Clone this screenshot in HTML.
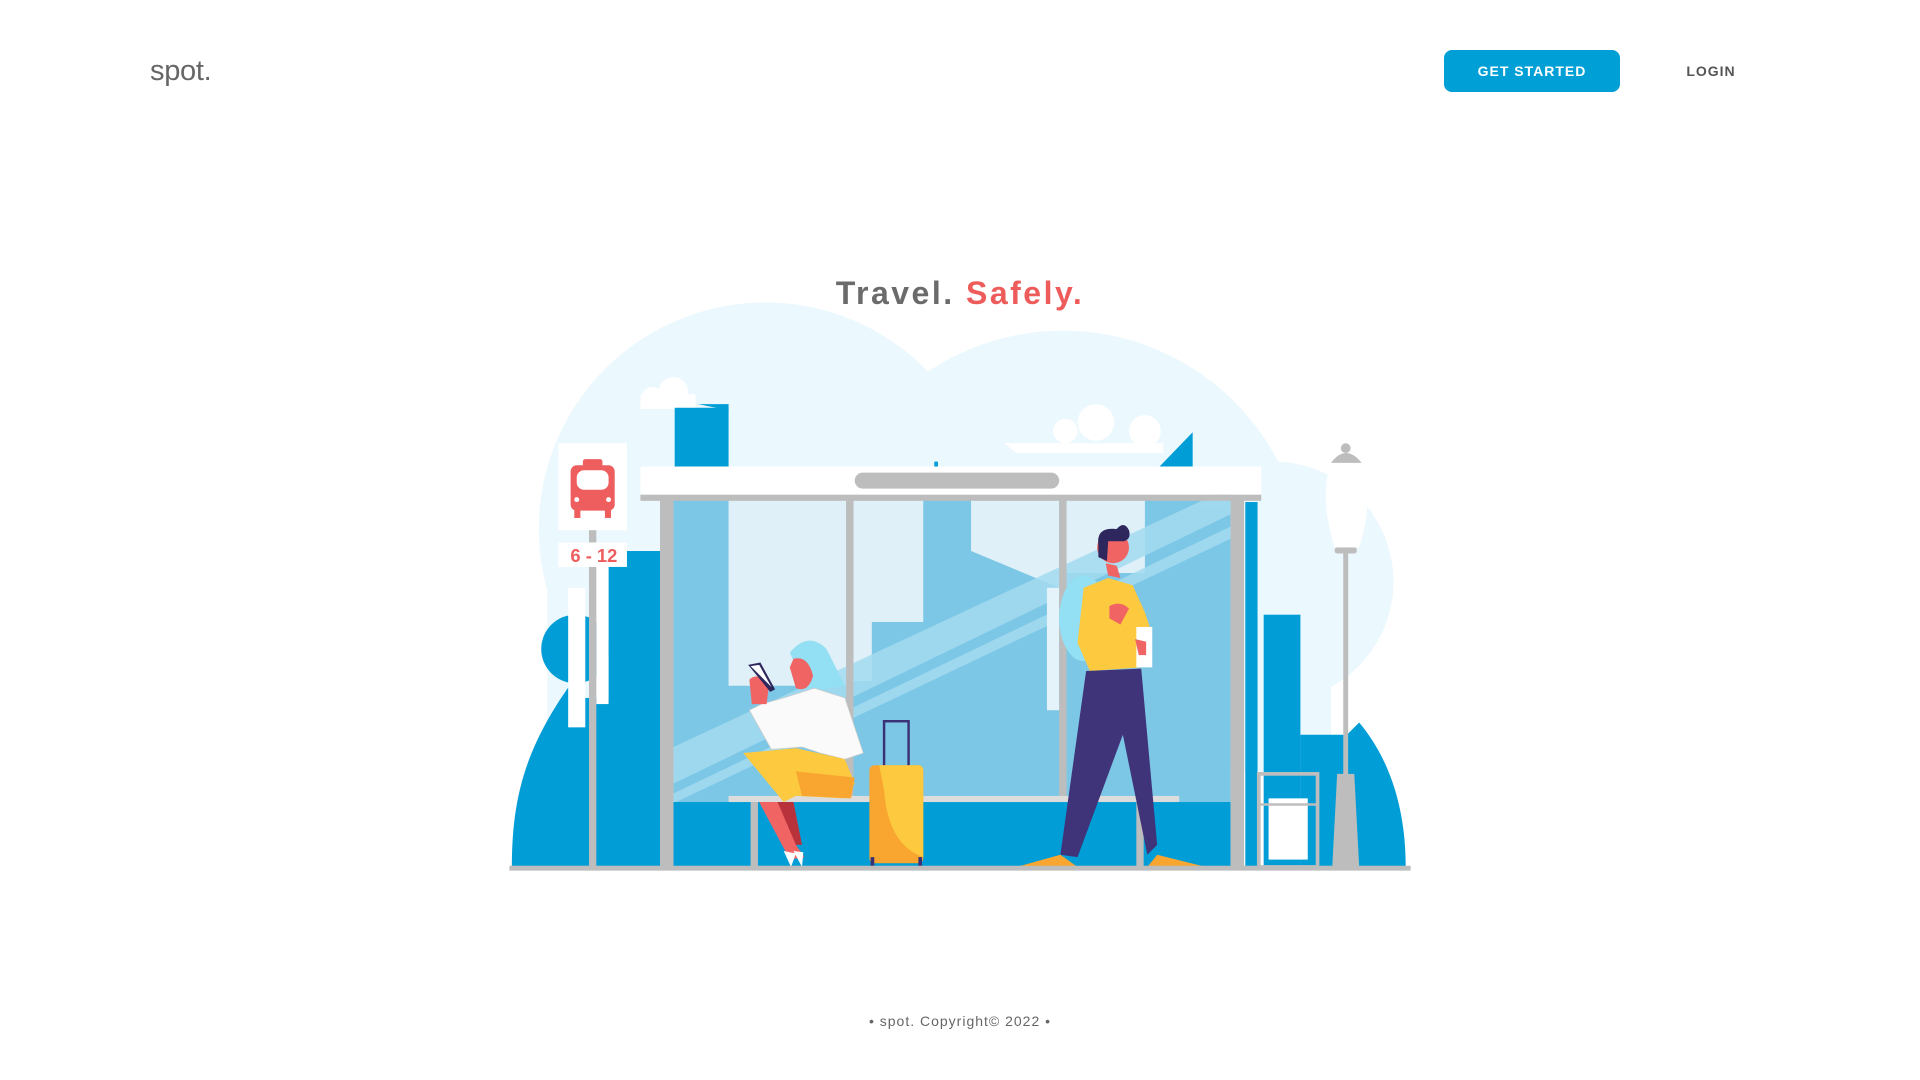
<!DOCTYPE html>
<html><head><meta charset="utf-8"><style>
html,body{margin:0;padding:0;background:#fff;width:1920px;height:1080px;overflow:hidden;font-family:"Liberation Sans",sans-serif}
svg{position:absolute;left:0;top:0}
.logo{position:absolute;left:150px;top:55px;font-size:29px;color:#666;letter-spacing:-0.3px}
.btn{position:absolute;left:1444px;top:50px;width:176px;height:42px;border-radius:8px;background:#009fd6;color:#fff;font-size:14px;font-weight:bold;letter-spacing:1px;text-align:center;line-height:42px}
.login{position:absolute;left:1670px;top:50px;width:82px;line-height:42px;text-align:center;font-size:14px;font-weight:bold;color:#555;letter-spacing:1px}
.title{position:absolute;left:0;width:1920px;top:275px;text-align:center;font-size:32px;font-weight:bold;letter-spacing:2.5px;color:#6b6b6b}
.title span{color:#ee5b5b}
.foot{position:absolute;left:0;width:1920px;top:1013px;text-align:center;font-size:14px;color:#666;letter-spacing:1px}
</style></head><body>
<svg width="1920" height="1080" viewBox="0 0 1568 882" preserveAspectRatio="none">
<!-- sky -->
<g fill="#ebf8fd">
<circle cx="625" cy="432" r="185"/><circle cx="868" cy="468" r="198"/><circle cx="1040" cy="475" r="98"/>
<rect x="447" y="430" width="640" height="200"/>
</g>
<!-- clouds -->
<g fill="#fff"><circle cx="533" cy="325" r="9"/><circle cx="550" cy="320" r="12"/><rect x="523" y="322" width="45" height="12"/>
<circle cx="895" cy="345" r="15"/><circle cx="935" cy="352" r="13"/><circle cx="870" cy="352" r="10"/><path d="M820 362 L950 362 L950 370 L830 370 Z"/></g>
<!-- dark hills/buildings -->
<g fill="#009dd6">
<path d="M418 708 C418 650 430 610 465 560 L465 708 Z"/><circle cx="470" cy="530" r="28"/>
<rect x="464" y="570" width="35" height="138"/>
<rect x="497" y="450" width="45" height="258"/>
<rect x="551" y="333" width="44" height="48"/><path d="M570 330 L595 330 L595 335 Z"/>
<path d="M947 381 L974 353 L974 381 Z"/><rect x="763" y="377" width="3" height="5"/>
<rect x="1017" y="410" width="10" height="298"/><rect x="1032" y="502" width="30" height="206"/>
<path d="M1062 600 L1100 600 L1110 590 C1135 620 1148 660 1148 708 L1062 708 Z"/>
</g>
<g fill="#fff"><rect x="464" y="480" width="14" height="114"/><rect x="487" y="460" width="10" height="115"/><rect x="974" y="408" width="11" height="55"/></g>
<!-- glass -->
<rect x="550" y="408" width="455" height="248" fill="#7cc6e6"/>
<g fill="#dff0f8"><path d="M595 408 L691 408 L691 560 L595 560 Z"/><path d="M697 408 L754 408 L754 508 L712 508 L712 556 L697 556 Z"/><path d="M793 408 L865 408 L865 480 L793 450 Z"/><rect x="871" y="408" width="64" height="60"/></g>
<g fill="#a4dcf0" opacity=".85"><path d="M550 610 L1005 398 L1005 420 L550 640 Z"/><path d="M550 648 L1005 430 L1005 440 L550 656 Z"/></g>
<rect x="855" y="480" width="10" height="100" fill="#e4f3fa"/>
<rect x="550" y="655" width="455" height="53" fill="#009dd6"/>
<!-- shelter -->
<rect x="523" y="381" width="507" height="23" fill="#fff"/>
<rect x="523" y="404" width="507" height="5" fill="#bdbdbd"/>
<rect x="698" y="386" width="167" height="13" rx="6.5" fill="#bdbdbd"/>
<g fill="#bdbdbd"><rect x="539" y="408" width="11" height="300"/><rect x="1005" y="408" width="11" height="300"/><rect x="691" y="408" width="6" height="244"/><rect x="865" y="408" width="6" height="244"/>
<rect x="613" y="655" width="6" height="53"/><rect x="928" y="655" width="6" height="53"/></g>
<rect x="595" y="650" width="368" height="5" fill="#dcdcdc"/>
<!-- bus sign -->
<rect x="481" y="430" width="6" height="278" fill="#bdbdbd"/>
<rect x="456" y="362" width="56" height="71" fill="#fff"/><rect x="456" y="443" width="56" height="20" fill="#fff"/>
<g fill="#ee5e5e"><rect x="466" y="380" width="36" height="37" rx="5"/><rect x="476" y="375" width="16" height="6" rx="2"/><rect x="469" y="415" width="5" height="8"/><rect x="494" y="415" width="5" height="8"/></g>
<rect x="471" y="384" width="26" height="16" rx="6" fill="#fff"/><circle cx="471" cy="408" r="2" fill="#fff"/><circle cx="497" cy="408" r="2" fill="#fff"/>
<text x="485" y="459" text-anchor="middle" font-family="Liberation Sans Narrow,Liberation Sans,sans-serif" font-weight="bold" font-size="15" fill="#ee5e5e">6 - 12</text>
<!-- lamp -->
<g fill="#bdbdbd"><rect x="1097" y="448" width="4" height="190"/><path d="M1092 632 L1106 632 L1110 708 L1088 708 Z"/><path d="M1087 378 Q1099 362 1112 378 Z"/><circle cx="1099" cy="366" r="4"/><rect x="1090" y="447" width="18" height="5" rx="2"/></g>
<path d="M1086 380 L1113 380 Q1122 410 1110 447 L1090 447 Q1078 410 1086 380 Z" fill="#fff"/>
<!-- bin -->
<rect x="1028" y="632" width="48" height="76" fill="none" stroke="#bdbdbd" stroke-width="3"/>
<rect x="1036" y="652" width="32" height="50" fill="#fff"/>
<line x1="1028" y1="657" x2="1076" y2="657" stroke="#bdbdbd" stroke-width="2"/>
<!-- woman -->
<path d="M645 533 Q660 515 675 530 L690 560 L660 565 Z" fill="#93dff3"/>
<path d="M648 538 Q660 535 664 552 Q660 566 650 562 L645 545 Z" fill="#f06464"/>
<path d="M640 570 L665 562 L690 570 L705 615 L690 620 L670 615 L655 610 L630 612 L612 580 L622 575 Z" fill="#fafafa" stroke="#ccc" stroke-width=".6"/>
<path d="M607 615 L650 611 L690 620 L698 640 L690 652 L650 650 L640 655 Z" fill="#fcc93f"/>
<path d="M650 630 L698 635 L695 652 L655 650 Z" fill="#f9a630"/>
<path d="M620 655 L640 655 L650 690 L657 700 L645 702 Z" fill="#f06464"/><path d="M635 655 L648 655 L655 690 L650 690 Z" fill="#b8323c"/>
<path d="M640 695 L646 708 L650 697 Z" fill="#fff"/><path d="M648 695 L655 708 L656 696 Z" fill="#fff"/>
<path d="M612 555 Q620 548 628 560 L626 575 L614 575 Z" fill="#f06464"/>
<path d="M611 543 L621 541 L633 563 L629 565 Z" fill="#2e275e"/><path d="M613 544 L620 543 L630 561 Z" fill="#fff"/>
<!-- suitcase -->
<rect x="722" y="589" width="20" height="38" fill="none" stroke="#3a3275" stroke-width="2"/>
<rect x="710" y="625" width="44" height="80" rx="4" fill="#f9a630"/>
<path d="M718 625 L750 625 Q754 625 754 630 L754 700 Q725 690 722 645 Z" fill="#fcc93f"/>
<rect x="711" y="700" width="3" height="8" fill="#3a3275"/><rect x="750" y="700" width="3" height="8" fill="#3a3275"/>
<!-- man -->
<ellipse cx="885" cy="505" rx="20" ry="35" fill="#93dff3"/>
<path d="M885 480 L905 472 L925 478 L935 500 L940 515 L932 545 L890 548 L880 525 Z" fill="#fcc93f"/>
<path d="M887 548 L932 546 L945 690 L937 698 L917 600 L880 700 L866 698 Z" fill="#3f3479"/>
<path d="M905 470 L915 472 L912 462 L903 460 Z" fill="#f06464"/>
<circle cx="909" cy="447" r="13" fill="#f06464"/>
<path d="M897 445 Q895 430 912 432 Q918 425 922 433 Q924 440 918 442 L905 442 L904 458 L897 455 Z" fill="#2e275e"/>
<path d="M906 495 Q915 490 922 497 L915 510 L906 505 Z" fill="#f06464"/>
<rect x="928" y="512" width="13" height="33" fill="#fff"/><path d="M927 522 L936 524 L936 535 L930 535 Z" fill="#f06464"/>
<path d="M830 708 L866 698 L880 708 Z" fill="#f9a630"/><path d="M937 708 L945 698 L985 708 Z" fill="#f9a630"/>
<!-- ground -->
<rect x="416" y="707" width="736" height="4" fill="#bdbdbd"/>
</svg>
<div class="logo">spot.</div>
<div class="btn">GET STARTED</div>
<div class="login">LOGIN</div>
<div class="title">Travel. <span>Safely.</span></div>
<div class="foot">• spot. Copyright© 2022 •</div>
</body></html>
